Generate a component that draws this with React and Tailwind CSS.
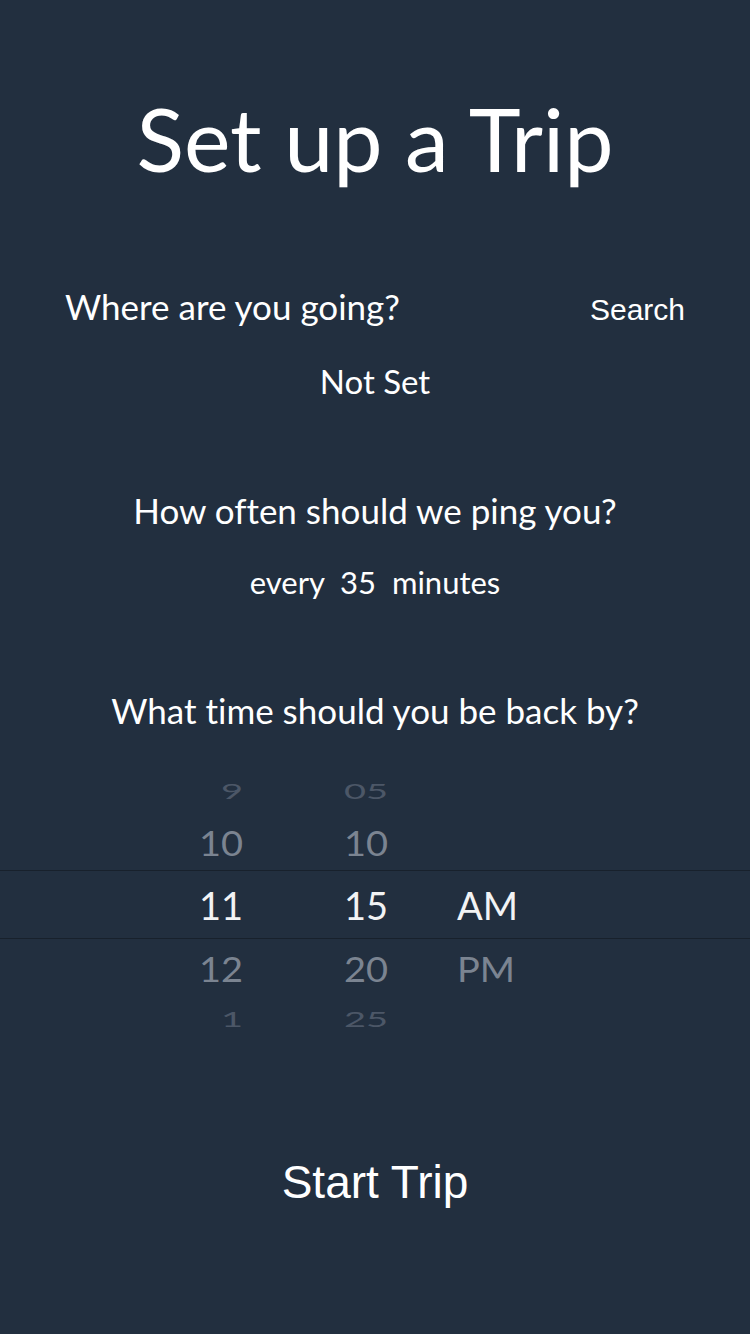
import React from "react";

const rows = [
  { h: "9", m: "05", p: "", box: "h-[47px]", text: "text-[#4c5767] scale-y-[0.55]" },
  { h: "10", m: "10", p: "", box: "h-[56px]", text: "text-[#7b8491] scale-y-[0.9]" },
  { h: "11", m: "15", p: "AM", box: "h-[69px] border-y border-[#18212c]", text: "text-[#f2f3f4]" },
  { h: "12", m: "20", p: "PM", box: "h-[57px]", text: "text-[#7b8491] scale-y-[0.9]" },
  { h: "1", m: "25", p: "", box: "h-[46px]", text: "text-[#4c5767] scale-y-[0.55]" },
];

const TimeWheel = () => {
  return (
    <div className="flex flex-col">
      {rows.map((r, i) => (
        <div key={i} className={`flex items-center ${r.box}`}>
          <div className={`ml-[163px] w-[80px] text-right text-[38px] leading-none ${r.text}`}>
            {r.h}
          </div>
          <div className={`w-[80px] ml-[83px] text-center text-[38px] leading-none ${r.text}`}>
            {r.m}
          </div>
          <div className={`ml-[51px] text-[38px] leading-none ${r.text}`}>{r.p}</div>
        </div>
      ))}
    </div>
  );
};

const App = () => {
  return (
    <div
      className="w-[750px] min-h-[1334px] bg-[#222f3f] text-white flex flex-col [font-variant-ligatures:none]"
      style={{ fontFamily: "Lato, 'Open Sans', sans-serif" }}
    >
      <h1 className="pt-[94px] text-center text-[88px] leading-none font-normal">
        Set up a Trip
      </h1>

      <div className="mt-[107px] flex items-baseline justify-between px-[65px]">
        <span className="text-[35px] leading-none">Where are you going?</span>
        <button className="text-[30px] leading-none font-['Liberation_Sans',sans-serif]">
          Search
        </button>
      </div>

      <p className="mt-[40px] text-center text-[33px] leading-none">Not Set</p>

      <p className="mt-[95px] text-center text-[35px] leading-none">
        How often should we ping you?
      </p>
      <p className="mt-[39px] text-center text-[31px] leading-none">
        every&nbsp; 35&nbsp; minutes
      </p>

      <p className="mt-[95px] text-center text-[35px] leading-none">
        What time should you be back by?
      </p>

      <div className="mt-[39px]">
        <TimeWheel />
      </div>

      <button className="mt-[117px] self-center text-[46px] leading-none font-['Liberation_Sans',sans-serif]">
        Start Trip
      </button>
    </div>
  );
};

export default App;
